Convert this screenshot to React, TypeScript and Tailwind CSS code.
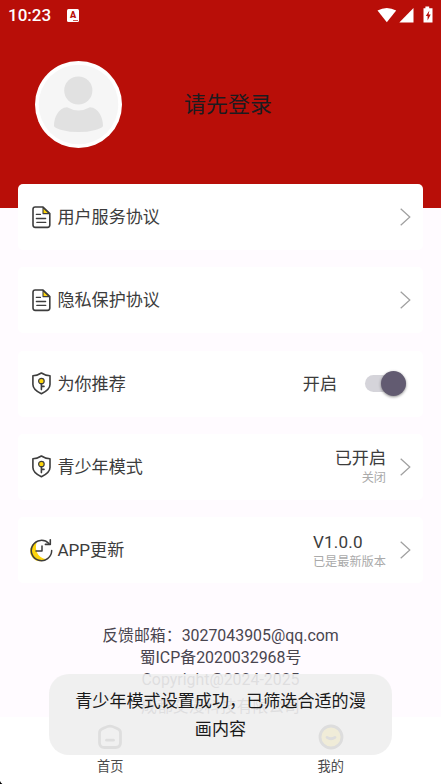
import React from 'react';

const Chevron: React.FC = () => (
  <svg className="h-[18px] w-[11px] flex-none" viewBox="0 0 11 18" fill="none" stroke="#a0a0a0" strokeWidth="1.25">
    <path d="M.7.7 9.8 9 .7 17.3" />
  </svg>
);

const DocIcon: React.FC = () => (
  <svg className="h-[23px] w-[23px]" viewBox="0 0 23 23" fill="none" stroke="#3d3d3d" strokeLinecap="round" strokeLinejoin="round">
    <path d="M13 1.4v6.2h6.6Z" fill="#fdd50b" strokeWidth="1.1" />
    <path d="M13 1H5.2Q3 1 3 3.2v15.9q0 2.3 2.3 2.3h12.2q2.3 0 2.3-2.3V7.6Z" strokeWidth="1.6" />
    <path d="M6.4 8.4h4M6.4 12.5h9.2M6.9 16.4h8.8" strokeWidth="1.4" />
  </svg>
);

const ShieldIcon: React.FC = () => (
  <svg className="h-[23px] w-[23px]" viewBox="0 0 23 23" fill="none" stroke="#3d3d3d" strokeLinecap="round" strokeLinejoin="round">
    <path d="M11.4 1Q7.2 3.7 2.9 3.7v8.8c0 4.3 4.2 7.2 8.5 9.3 4.3-2.1 8.6-5 8.6-9.3V3.7Q15.6 3.7 11.4 1Z" strokeWidth="1.6" />
    <circle cx="11.4" cy="9.1" r="2.8" fill="#fdd50b" strokeWidth="1.2" />
    <path d="M11.4 11.9v5.7M11.8 14.4h2.2" strokeWidth="1.6" />
  </svg>
);

const UpdateIcon: React.FC = () => (
  <svg className="h-[23px] w-[23px]" viewBox="0 0 23 23" fill="none" stroke="#3d3d3d" strokeLinecap="round" strokeLinejoin="round">
    <path d="M7 2.5A10.2 10.2 0 1 0 16.6 20.2Q9.4 19.4 7 13.6 4.8 7.8 7 2.5Z" fill="#fdd50b" stroke="none" />
    <path d="M18.9 4.5A10.2 10.2 0 1 0 21.7 11.6" strokeWidth="1.5" />
    <path d="M20.3.8v4.6h-4.9" strokeWidth="1.6" />
    <path d="M12 6.9v5.2H6" strokeWidth="1.5" />
  </svg>
);

type RowProps = {
  icon: React.ReactNode;
  title: string;
  children?: React.ReactNode;
};

const Row: React.FC<RowProps> = ({ icon, title, children }) => (
  <div className="flex h-[66px] items-center rounded-[5px] bg-white pr-3 pl-3 text-[17.1px] text-[#3c3c3c]">
    <span className="w-[27px] flex-none">{icon}</span>
    <span className="flex-1 pt-[2px]">{title}</span>
    {children}
  </div>
);

const StatusBar: React.FC = () => (
  <div className="flex h-[30px] items-center pr-2 pl-2 text-white">
    <span className="w-[59px] text-[17px] font-medium leading-none">10:23</span>
    <span className="relative flex h-[13px] w-[12px] items-center justify-center rounded-[1.5px] bg-white text-[9px] font-black leading-none text-[#b80e08]">
      <span>A</span>
      <span className="absolute right-[1px] bottom-[1px] h-px w-[5px] bg-[#b80e08]/70" />
    </span>
    <svg className="ml-auto h-[17px] w-[56px] overflow-visible" viewBox="0 0 56 17" fill="#fff">
      <path d="M.5 3.6Q9.8-1.6 19.2 3.6L9.8 15.2Z" />
      <path d="M36.5 1v14.5H22.3Z" />
      <path d="M48.4-.6h3.8v1.9h3.3v14.2H46.5V1.3h1.9Z" />
      <path d="M52.4 3.6 48.8 8.9h1.8v4.5l3.1-6h-2.1l.8-3.8Z" fill="#b80e08" />
    </svg>
  </div>
);

const App: React.FC = () => {
  return (
    <div className="relative flex h-[784px] w-[441px] flex-col overflow-hidden bg-[#fffbff] font-['Roboto','Noto_Sans_CJK_SC',sans-serif]">
      {/* Header */}
      <header className="h-[208px] flex-none bg-[#b80e08]">
        <StatusBar />
        <div className="flex items-center pt-[30.5px] pl-[35px]">
          <svg className="size-[87px]" viewBox="0 0 87 87">
            <circle cx="43.5" cy="43.5" r="43.5" fill="#fff" />
            <circle cx="43.5" cy="43.5" r="39.8" fill="#f6f6f6" />
            <circle cx="43.3" cy="29.5" r="14.1" fill="#e1e1e1" />
            <path d="M32 46.3Q43.5 52.7 55 46.3c8.7.4 13 10.6 13 18.2 0 2.1-3.5 3.2-7.5 4.4q-17 4.4-34 0c-4-1.2-7.5-2.3-7.5-4.4 0-7.6 4.3-17.8 13-18.2Z" fill="#e1e1e1" />
          </svg>
          <span className="ml-[62px] pt-[2px] text-[22px] leading-none text-[#1c1b1f]">请先登录</span>
        </div>
      </header>

      {/* Menu */}
      <main className="-mt-6 flex flex-none flex-col gap-[17.3px] pr-[18px] pl-[18.4px]">
        <Row icon={<DocIcon />} title="用户服务协议">
          <Chevron />
        </Row>
        <Row icon={<DocIcon />} title="隐私保护协议">
          <Chevron />
        </Row>
        <Row icon={<ShieldIcon />} title="为你推荐">
          <span className="pt-[2px]">开启</span>
          <span className="mr-[5px] ml-7 flex h-[17px] w-[41px] items-center justify-end rounded-full bg-[#d5d4da]">
            <span className="size-[25px] flex-none rounded-full bg-[#625b71] shadow-[0_1px_3px_rgba(0,0,0,0.45)]" />
          </span>
        </Row>
        <Row icon={<ShieldIcon />} title="青少年模式">
          <div className="mr-[14px] flex flex-col items-end pt-px">
            <span className="leading-[22px]">已开启</span>
            <span className="text-[12.2px] leading-[18px] text-[#aaaaaa]">关闭</span>
          </div>
          <Chevron />
        </Row>
        <Row icon={<UpdateIcon />} title="APP更新">
          <div className="mr-[14px] flex flex-col items-start pt-[2px]">
            <span className="leading-[22px] tracking-[0.2px]">V1.0.0</span>
            <span className="text-[12.2px] leading-[18px] text-[#aaaaaa]">已是最新版本</span>
          </div>
          <Chevron />
        </Row>
      </main>

      {/* Footer info */}
      <div className="mt-[42px] flex h-[91.5px] flex-none flex-col items-center text-[15.9px] leading-[22px] text-[#49454f]">
        <span>反馈邮箱：3027043905@qq.com</span>
        <span>蜀ICP备2020032968号</span>
        <span>Copyright@2024-2025</span>
        <span className="mt-[5px]">成都艾漫科技有限公司</span>
      </div>

      {/* Tab bar */}
      <nav className="grid flex-1 grid-cols-2 bg-white text-[13.2px] leading-[18px] text-[#4c4c4c]">
        <div className="flex flex-col items-center pt-[7px]">
          <svg className="size-[26px]" viewBox="0 0 26 26" fill="none" stroke="#4a4a4a" strokeWidth="2.8" strokeLinecap="round" strokeLinejoin="round">
            <path d="M8 3.6Q13 .8 18 3.6l3.1 1.5Q23.5 6.3 23.5 9v9.5q0 5-5 5h-11q-5 0-5-5V9q0-2.7 2.4-3.9Z" />
            <path d="M9.5 16.2h7" />
          </svg>
          <span className="mt-[8px]">首页</span>
        </div>
        <div className="flex flex-col items-center pt-[7px]">
          <svg className="size-[26px]" viewBox="0 0 26 26" fill="none" stroke="#3d3d3d" strokeWidth="2.8" strokeLinecap="round">
            <circle cx="13" cy="13" r="11" fill="#fdd50b" />
            <path d="M9 13.4q4 2.7 8 0" />
          </svg>
          <span className="mt-[8px]">我的</span>
        </div>
      </nav>

      {/* Toast */}
      <div className="absolute top-[674px] left-[49px] flex h-[81px] w-[343px] items-center justify-center rounded-[20px] bg-[#eeeeee]/90 px-6 pt-[2px] text-center text-[17.1px] leading-[27.5px] text-[#1a1a1a]">
        <span>
          青少年模式设置成功，已筛选合适的漫
          <br />
          画内容
        </span>
      </div>

      {/* Rounded screen corner */}
      <svg className="absolute bottom-0 left-0 size-[4px]" viewBox="0 0 4 4">
        <path d="M0 1Q.8 3 2.4 4H0Z" fill="#000" />
      </svg>
    </div>
  );
};

export default App;
